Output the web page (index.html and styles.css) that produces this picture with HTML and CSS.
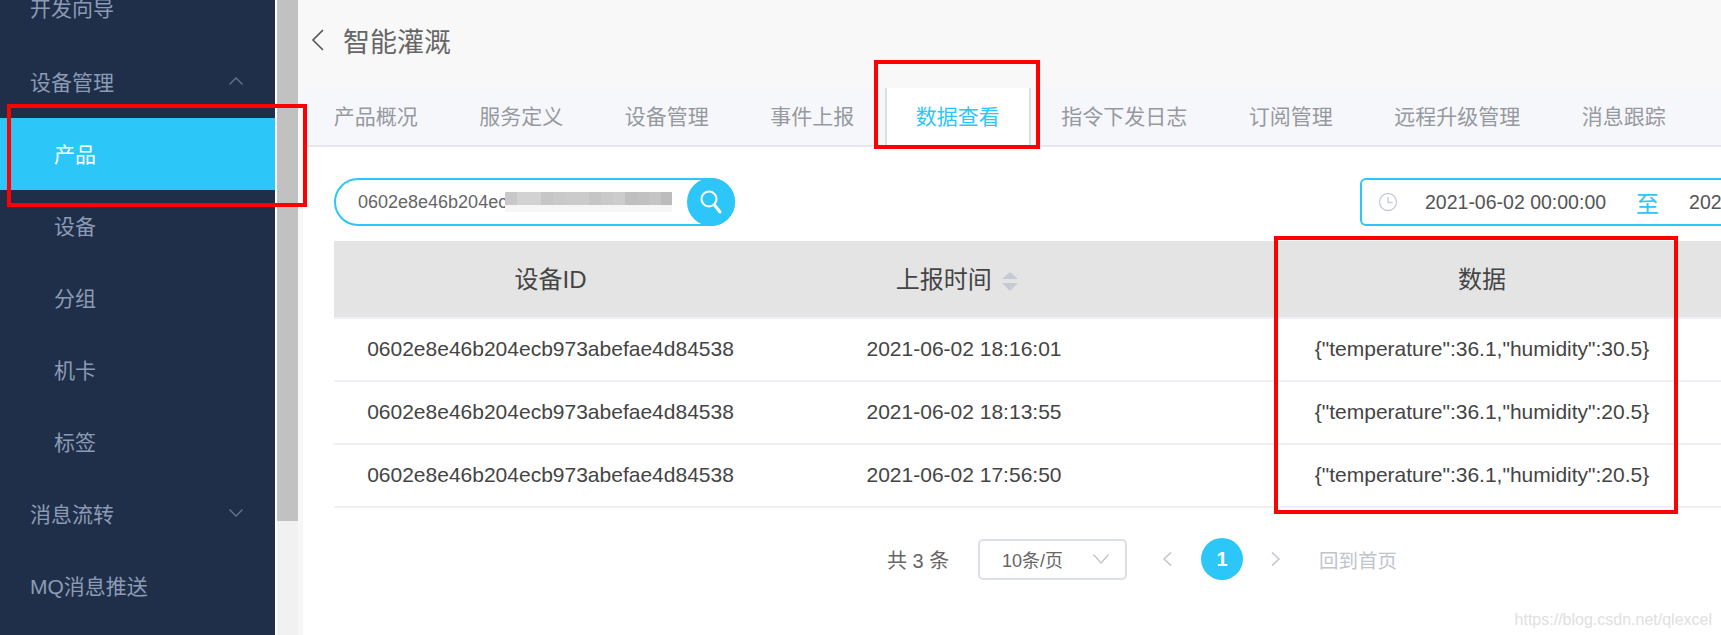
FILE: index.html
```html
<!DOCTYPE html>
<html lang="zh-CN">
<head>
  <meta charset="UTF-8">
  <title>智能灌溉</title>
  <link rel="stylesheet" href="styles.css">
</head>
<body>

  <aside class="sidebar">
    <a class="nav-item">开发向导</a>
    <a class="nav-item">设备管理
      <svg class="nav-arrow" viewBox="0 0 14 8"><path d="M0.5 7.5L7 1l6.5 6.5"/></svg>
    </a>
    <a class="nav-item sub active">产品</a>
    <a class="nav-item sub">设备</a>
    <a class="nav-item sub">分组</a>
    <a class="nav-item sub">机卡</a>
    <a class="nav-item sub">标签</a>
    <a class="nav-item">消息流转
      <svg class="nav-arrow" viewBox="0 0 14 8"><path d="M0.5 0.5L7 7l6.5-6.5"/></svg>
    </a>
    <a class="nav-item">MQ消息推送</a>
  </aside>

  <div class="scrollbar"><div class="scroll-thumb"></div></div>

  <main class="main">
    <div class="title-bar">
      <svg class="back" viewBox="0 0 13 22"><path d="M12 1L2 11l10 10"/></svg>
      <h1>智能灌溉</h1>
    </div>

    <nav class="tabs">
      <a class="tab">产品概况</a>
      <a class="tab">服务定义</a>
      <a class="tab">设备管理</a>
      <a class="tab">事件上报</a>
      <a class="tab active">数据查看</a>
      <a class="tab">指令下发日志</a>
      <a class="tab">订阅管理</a>
      <a class="tab">远程升级管理</a>
      <a class="tab">消息跟踪</a>
    </nav>

    <div class="content">
      <div class="toolbar">
        <div class="search">
          <span class="search-text">0602e8e46b204ecb973abefae4d84538</span>
          <span class="mosaic"></span>
          <button class="search-btn">
            <svg viewBox="0 0 48 48"><circle cx="22" cy="21" r="7.5"/><path class="handle" d="M27.5 27l5.5 7"/></svg>
          </button>
        </div>
        <div class="date-range">
          <svg class="clock" viewBox="0 0 20 20"><circle cx="10" cy="10" r="8.5"/><path d="M10 5v5.5h4.5"/></svg>
          <span class="date">2021-06-02 00:00:00</span>
          <span class="date-sep">至</span>
          <span class="date">2021-06-02 23:59:59</span>
        </div>
      </div>

      <table class="data-table">
        <thead>
          <tr>
            <th class="col-id">设备ID</th>
            <th class="col-time">上报时间
              <span class="sort"><i class="sort-up"></i><i class="sort-down"></i></span>
            </th>
            <th class="col-data">数据</th>
          </tr>
        </thead>
        <tbody>
          <tr>
            <td>0602e8e46b204ecb973abefae4d84538</td>
            <td>2021-06-02 18:16:01</td>
            <td>{"temperature":36.1,"humidity":30.5}</td>
          </tr>
          <tr>
            <td>0602e8e46b204ecb973abefae4d84538</td>
            <td>2021-06-02 18:13:55</td>
            <td>{"temperature":36.1,"humidity":20.5}</td>
          </tr>
          <tr>
            <td>0602e8e46b204ecb973abefae4d84538</td>
            <td>2021-06-02 17:56:50</td>
            <td>{"temperature":36.1,"humidity":20.5}</td>
          </tr>
        </tbody>
      </table>

      <div class="pager">
        <span class="total">共 3 条</span>
        <div class="page-size">
          <span>10条/页</span>
          <svg viewBox="0 0 16 10"><path d="M0.5 0.5L8 9l7.5-8.5"/></svg>
        </div>
        <svg class="page-arrow" viewBox="0 0 9 14"><path d="M8 0.5L1 7l7 6.5"/></svg>
        <span class="page-num">1</span>
        <svg class="page-arrow" viewBox="0 0 9 14"><path d="M1 0.5L8 7l-7 6.5"/></svg>
        <a class="first-page">回到首页</a>
      </div>
    </div>
  </main>

  <!-- annotations drawn over the screenshot -->
  <div class="mark mark-nav"></div>
  <div class="mark mark-tab"></div>
  <div class="mark mark-col"></div>
  <div class="watermark">https://blog.csdn.net/qlexcel</div>

</body>
</html>
```

FILE: styles.css
```css
* {
  box-sizing: border-box;
}

html, body {
  margin: 0;
  height: 635px;
  overflow: hidden;
}

body {
  display: flex;
  position: relative;
  font-family: "Liberation Sans", "Noto Sans CJK SC", sans-serif;
  background-color: #fff;
  color: #444;
}

.sidebar {
  width: 275px;
  flex-shrink: 0;
  background-color: #1f2f4a;
}

.nav-item {
  display: flex;
  align-items: center;
  justify-content: space-between;
  height: 72px;
  padding: 0 32px 2px 30px;
  font-size: 21px;
  color: #8c9bb4;
}

.nav-item:first-child {
  margin-top: -28px;
  margin-bottom: 2px;
}

.nav-item.sub {
  padding-left: 54px;
}

.nav-item.active {
  background-color: #2dc6f8;
  color: #fff;
}

.nav-arrow {
  width: 14px;
  height: 8px;
  fill: none;
  stroke: #66758e;
  stroke-width: 1.3;
}

.scrollbar {
  width: 23px;
  flex-shrink: 0;
  background-color: #f1f1f1;
  border-left: 2px solid #fff;
}

.scroll-thumb {
  height: 521px;
  background-color: #c1c1c1;
}

.main {
  flex: 1;
  min-width: 0;
  overflow: hidden;
  background-color: #f7f7f7;
  padding-left: 5px;
}

.title-bar {
  display: flex;
  align-items: center;
  height: 88px;
  background-color: #f8f8f8;
  padding: 0 0 8px 8px;
}

.back {
  width: 13px;
  height: 22px;
  fill: none;
  stroke: #555;
  stroke-width: 1.6;
}

h1 {
  margin: 0 0 0 19px;
  font-size: 27px;
  font-weight: normal;
  color: #666;
}

.tabs {
  display: flex;
  height: 59px;
  background-color: #f6f7fb;
  border-bottom: 2px solid #e6e7f0;
}

.tab {
  height: 59px;
  padding: 0 28.75px;
  border: solid transparent;
  border-width: 0 2px;
  font-size: 21px;
  line-height: 58px;
  white-space: nowrap;
  color: #96999f;
}

.tab.active {
  background-color: #fff;
  border-color: #dcdfe8;
  color: #2dc6f8;
}

.content {
  background-color: #fff;
  height: 488px;
  padding: 31px 0 0 31px;
}

.toolbar {
  display: flex;
}

.search {
  display: flex;
  align-items: center;
  width: 401px;
  height: 48px;
  flex-shrink: 0;
  border: 2px solid #2dc6f8;
  border-radius: 24px;
  padding-left: 22px;
  font-size: 18px;
  color: #666;
}

.search-text {
  width: 147px;
  overflow: hidden;
  white-space: nowrap;
}

.mosaic {
  width: 167px;
  height: 20px;
  background-color: #f6f6f6;
  background-image: linear-gradient(90deg,
    #c8c8c8 0 12px, #d2d2d2 12px 36px, #c6c6c6 36px 48px, #c9c9c9 48px 60px,
    #cbcbcb 60px 84px, #c5c5c5 84px 96px, #c9c9c9 96px 108px, #cccccc 108px 120px,
    #bfbfbf 120px 132px, #c1c1c1 132px 144px, #c5c5c5 144px 156px, #bcbcbc 156px 167px);
  background-size: 100% 13px;
  background-repeat: no-repeat;
}

.search-btn {
  width: 48px;
  height: 48px;
  margin: -2px -2px -2px auto;
  padding: 0;
  border: none;
  border-radius: 50%;
  background-color: #2dc6f8;
}

.search-btn svg {
  display: block;
  fill: none;
  stroke: #fff;
  stroke-width: 2;
}

.search-btn .handle {
  stroke-width: 3;
  stroke-linecap: round;
}

.date-range {
  display: flex;
  align-items: center;
  flex-shrink: 0;
  width: 640px;
  height: 48px;
  margin-left: 625px;
  border: 2px solid #2dc6f8;
  border-radius: 6px;
  padding-left: 16px;
  font-size: 19.5px;
  color: #555;
  white-space: nowrap;
}

.clock {
  width: 20px;
  height: 20px;
  margin-right: 27px;
  fill: none;
  stroke: #c9ced9;
  stroke-width: 1.4;
}

.date-sep {
  margin: 0 30px;
  font-size: 23px;
  color: #2dc6f8;
}

.data-table {
  width: 1469px;
  margin-top: 15px;
  table-layout: fixed;
  border-collapse: collapse;
}

.data-table th {
  height: 77px;
  padding: 0 0 4px;
  background-color: #e4e4e4;
  border-bottom: 2px solid #eef0f6;
  font-size: 24px;
  font-weight: normal;
  color: #444;
}

.col-id { width: 433px; }
.col-time { width: 394px; }

.data-table th.col-time {
  padding-right: 14px;
}

.data-table td {
  height: 63px;
  padding: 0 0 2px;
  border-bottom: 2px solid #eef0f6;
  font-size: 21px;
  text-align: center;
  color: #444;
}

.sort {
  display: inline-flex;
  flex-direction: column;
  gap: 4px;
  vertical-align: middle;
  margin-left: 4px;
}

.sort i {
  display: block;
  border-left: 8px solid transparent;
  border-right: 8px solid transparent;
}

.sort-up {
  border-bottom: 7px solid #c5cad6;
}

.sort-down {
  border-top: 8px solid #c5cad6;
}

.pager {
  display: flex;
  align-items: center;
  margin: 30px 0 0 553px;
  height: 42px;
  font-size: 20px;
  color: #666;
  white-space: nowrap;
}

.total {
  width: 61px;
  white-space: nowrap;
}

.page-size {
  display: flex;
  align-items: center;
  justify-content: space-between;
  width: 149px;
  height: 41px;
  margin: 0 36px 0 30px;
  border: 2px solid #dcdfe6;
  border-radius: 5px;
  padding: 0 16px 0 22px;
  font-size: 18px;
}

.page-size svg {
  width: 16px;
  height: 10px;
  fill: none;
  stroke: #c0c4cc;
  stroke-width: 1.3;
}

.page-arrow {
  width: 9px;
  height: 14px;
  fill: none;
  stroke: #c0c4cc;
  stroke-width: 1.5;
}

.page-num {
  width: 42px;
  height: 42px;
  margin: 0 28px 0 29px;
  border-radius: 50%;
  background-color: #2dc6f8;
  color: #fff;
  font-weight: bold;
  line-height: 42px;
  text-align: center;
}

.first-page {
  margin-left: 39px;
  font-size: 19.5px;
  color: #c0c4cc;
}

.mark {
  position: absolute;
  border: 4px solid #fe0000;
}

.mark-nav {
  left: 7px;
  top: 104px;
  width: 300px;
  height: 103px;
}

.mark-tab {
  left: 874px;
  top: 60px;
  width: 166px;
  height: 89px;
}

.mark-col {
  left: 1274px;
  top: 236px;
  width: 404px;
  height: 278px;
}

.watermark {
  position: absolute;
  right: 9px;
  top: 611px;
  font-size: 16px;
  color: #e0e0e0;
}
```
